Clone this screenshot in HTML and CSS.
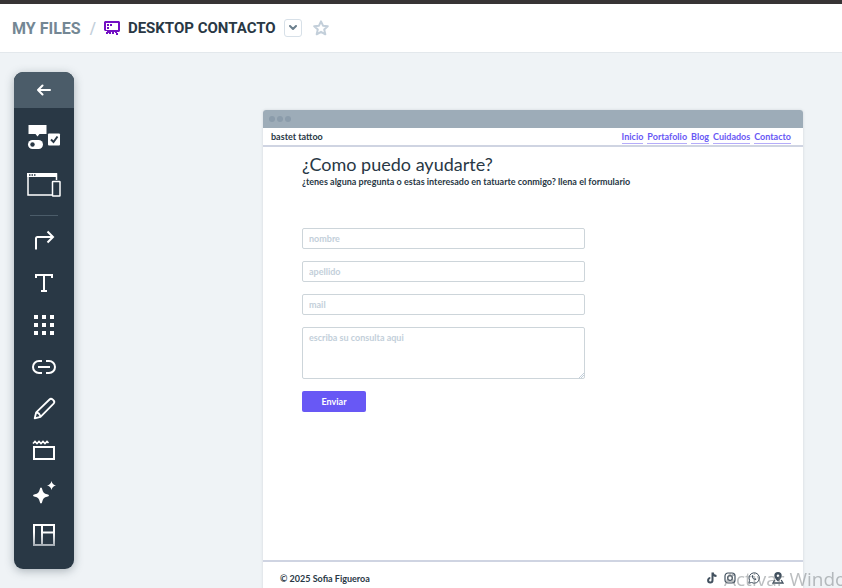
FILE: index.html
```html
<!DOCTYPE html>
<html lang="es">
<head>
<meta charset="utf-8">
<meta name="viewport" content="width=device-width, initial-scale=1">
<title>Desktop Contacto</title>
<link rel="stylesheet" href="styles.css">
</head>
<body>
<header class="topbar">
  <a class="crumb" href="#">MY FILES</a>
  <span class="slash">/</span>
  <svg class="board-icon" width="16" height="14" viewBox="0 0 16 14"><path fill-rule="evenodd" fill="#730fc3" d="M1 0h14l1 1v9l-1 1h-2v1h1v2h-2v-2h-1v-1h-1v2H8v-2H7v2H5v-1H4v1H2v-2h1v-1H1l-1-1V1zM2 2v7h12V2zM3 3h2v2H3zM6 3h2v2H6zM3 6h2v2H3z"/></svg>
  <h1 class="title">DESKTOP CONTACTO</h1>
  <button class="drop" aria-label="Opciones"><svg width="8" height="6" viewBox="0 0 8 6"><path d="M1 1l3 3 3-3" fill="none" stroke="#6b7f8d" stroke-width="2" stroke-linecap="round" stroke-linejoin="round"/></svg></button>
  <button class="star" aria-label="Favorito"><svg width="16" height="16" viewBox="0 0 16 16"><path d="M8 1.300l2 4.400 4.800.5-3.600 3.200 1.100 4.900L8 11.800l-4.300 2.500 1.100-4.900L1.200 6.200l4.800-.5z" fill="none" stroke="#c3cfda" stroke-width="2" stroke-linejoin="round"/></svg></button>
</header>
<main class="canvas">
  <nav class="tools" aria-label="Herramientas">
    <button class="back" aria-label="Volver"><svg width="14" height="12" viewBox="0 0 14 12"><path d="M13 6H1M5.500 1.500L1 6l4.500 4.500" fill="none" stroke="#fff" stroke-width="2" stroke-linecap="round" stroke-linejoin="round"/></svg></button>
    <div class="tool-list">
      <button class="tool large" aria-label="Componentes"><svg width="48" height="48" viewBox="0 0 48 48"><path fill="#fff" d="M9 12h17.500v9H19.500L17.500 23.500 15.500 21H8.500v-9z"/><rect x="8" y="27" width="15" height="9" rx="4.500" fill="#fff"/><circle cx="12.500" cy="31.500" r="2.200" fill="#293845"/><rect x="28" y="20.500" width="12" height="12" rx="1" fill="#fff"/><path d="M31 26.500l2.500 2.500 4-5.500" fill="none" stroke="#293845" stroke-width="2"/></svg></button>
      <button class="tool large" aria-label="Pantallas"><svg width="48" height="48" viewBox="0 0 48 48"><path d="M32 34H8V13h28.500v6" fill="none" stroke="#fff" stroke-width="1.500"/><path fill="#fff" d="M7 12h30v4H7z"/><path fill="#293845" d="M9 13.300h1.500v1.500H9zM11.500 13.300H13v1.500h-1.500zM14 13.300h1.500v1.500H14z"/><rect x="32.500" y="20.500" width="7.500" height="14.500" rx=".5" fill="none" stroke="#fff" stroke-width="1.500"/></svg></button>
      <div class="rule"></div>
      <button class="tool" aria-label="Flecha"><svg width="42" height="42" viewBox="0 0 42 42"><path d="M13 29.500V18.500q0-1.500 1.500-1.500H30M24.500 11.500L30 17l-5.500 5.500" fill="none" stroke="#fff" stroke-width="2"/></svg></button>
      <button class="tool" aria-label="Texto"><svg width="42" height="42" viewBox="0 0 42 42"><path d="M13 16v-3h16v3M21 13v16M18 29h6" fill="none" stroke="#fff" stroke-width="2"/></svg></button>
      <button class="tool" aria-label="Iconos"><svg width="42" height="42" viewBox="0 0 42 42"><path fill="#fff" d="M11 11h4v4h-4zM19 11h4v4h-4zM27 11h4v4h-4zM11 19h4v4h-4zM19 19h4v4h-4zM27 19h4v4h-4zM11 27h4v4h-4zM19 27h4v4h-4zM27 27h4v4h-4z"/></svg></button>
      <button class="tool" aria-label="Enlace"><svg width="42" height="42" viewBox="0 0 42 42"><path d="M19 15h-3a6 6 0 0 0 0 12h3M23 15h3a6 6 0 0 1 0 12h-3M15 21h12" fill="none" stroke="#fff" stroke-width="2"/></svg></button>
      <button class="tool" aria-label="Lápiz"><svg width="42" height="42" viewBox="0 0 42 42"><path d="M11.700 30.300l1.500-6L26.500 11.500q1.500-1.500 3.300.2l.8.8q1.500 1.500 0 3.200L17.500 28.800zM13.200 24.300q3.500.5 4.300 4.500" fill="none" stroke="#fff" stroke-width="1.800" stroke-linejoin="round"/></svg></button>
      <button class="tool" aria-label="Contenedor"><svg width="42" height="42" viewBox="0 0 42 42"><rect x="11" y="17" width="20" height="12" fill="none" stroke="#fff" stroke-width="2"/><path d="M10 13.500l2-2 2 2 2-2 2 2 2-2 2 2 2-2 1.500 1.500" fill="none" stroke="#fff" stroke-width="1.700"/></svg></button>
      <button class="tool" aria-label="Inteligencia artificial"><svg width="42" height="42" viewBox="0 0 42 42"><path fill="#fff" d="M18 15.500q1 0 1.300 2 .7 4 4.700 4.700 2 .3 2 1.300t-2 1.300q-4 .7-4.700 4.700-.3 2-1.300 2t-1.300-2q-.7-4-4.700-4.700-2-.3-2-1.300t2-1.300q4-.7 4.700-4.700.3-2 1.300-2zM28.500 9q.8 3.700 4.500 4.500-3.700.8-4.500 4.500-.8-3.700-4.500-4.500 3.700-.8 4.500-4.500z"/></svg></button>
      <button class="tool" aria-label="Plantillas"><svg width="42" height="42" viewBox="0 0 42 42"><defs><linearGradient id="fade" gradientUnits="userSpaceOnUse" x1="0" y1="18" x2="0" y2="32"><stop stop-color="#fff"/><stop offset="1" stop-color="#a3abb2"/></linearGradient></defs><path d="M11 11h20v20H11zM19 11v20M19 18.500h12" fill="none" stroke="url(#fade)" stroke-width="2"/></svg></button>
    </div>
  </nav>
  <section class="frame">
    <div class="chrome"><i></i><i></i><i></i></div>
    <div class="site-head">
      <span class="brand">bastet tattoo</span>
      <nav class="links"><a href="#">Inicio</a><a href="#">Portafolio</a><a href="#">Blog</a><a href="#">Cuidados</a><a href="#">Contacto</a></nav>
    </div>
    <div class="content">
      <h2>¿Como puedo ayudarte?</h2>
      <p>¿tenes alguna pregunta o estas interesado en tatuarte conmigo? llena el formulario</p>
      <form class="form">
        <input type="text" aria-label="nombre" placeholder="nombre">
        <input type="text" aria-label="apellido" placeholder="apellido">
        <input type="email" aria-label="mail" placeholder="mail">
        <textarea aria-label="consulta" placeholder="escriba su consulta aqui"></textarea>
        <button type="button">Enviar</button>
      </form>
    </div>
    <footer class="site-foot">
      <span>© 2025 Sofia Figueroa</span>
      <div class="social">
        <a href="#" aria-label="TikTok"><svg width="12" height="12" viewBox="0 0 12 12"><path d="M6.500.5v7.800a2.200 2.200 0 1 1-2.200-2.200M6.500.5q.5 3.200 4 3.500" fill="none" stroke="#42515f" stroke-width="2"/></svg></a>
        <a href="#" aria-label="Instagram"><svg width="12" height="12" viewBox="0 0 12 12"><g fill="none" stroke="#42515f" stroke-width="1.200"><rect x="1" y="1" width="10" height="10" rx="3"/><circle cx="6" cy="6" r="2.400"/></g><circle cx="9" cy="3" r=".8" fill="#42515f"/></svg></a>
        <a href="#" aria-label="WhatsApp"><svg width="12" height="12" viewBox="0 0 12 12"><path d="M.8 11.200l.8-2.800A5.200 5.200 0 1 1 3.600 10.500z" fill="none" stroke="#42515f"/><path d="M4 3.300q-.8 1 .5 2.900 1.500 2 3.300 1.800l.7-1-1.300-.8-.8.6Q5.200 6.200 5 5.100l.5-.6L5 3.300z" fill="#42515f"/></svg></a>
        <a href="#" aria-label="Ubicación"><svg width="12" height="12" viewBox="0 0 12 12"><path fill-rule="evenodd" fill="#42515f" d="M6 0a3.700 3.700 0 0 1 3.700 3.700Q9.700 6 6 9.500 2.300 6 2.300 3.700A3.700 3.700 0 0 1 6 0zm0 2.400a1.300 1.300 0 1 0 0 2.600 1.300 1.300 0 0 0 0-2.600z"/><path d="M2.800 8L1 11h10L9.200 8" fill="none" stroke="#42515f" stroke-width="1.300"/></svg></a>
      </div>
    </footer>
  </section>
</main>
<div class="watermark">Activar Windows</div>
</body>
</html>
```
FILE: styles.css
```css
* { box-sizing: border-box; }
body {
  margin: 0;
  height: 100vh;
  display: flex;
  flex-direction: column;
  overflow: hidden;
  background: #eff3f6;
  color: #293845;
  font-family: Roboto, "Liberation Sans", sans-serif;
}
button { border: 0; padding: 0; background: none; font: inherit; cursor: pointer; }
a { text-decoration: none; color: inherit; }
svg { display: block; }

.topbar {
  flex: none;
  display: flex;
  align-items: center;
  height: 53px;
  padding: 0 12px;
  background: #fff;
  border-top: 4px solid #373435;
  border-bottom: 1px solid #e3e8ec;
  font-size: 16px;
  font-weight: 700;
}
.crumb { color: #748794; }
.slash { margin: 0 8px 0 9px; color: #c3cfda; font-weight: 500; }
.title { margin: 0 0 0 8px; font-size: 15px; font-weight: 700; }
.drop {
  display: grid;
  place-items: center;
  width: 18px;
  height: 18px;
  margin: 0 11px 0 8px;
  border: 1px solid #d7e0e8;
  border-radius: 3px;
}

.canvas { flex: 1; display: flex; align-items: flex-start; min-height: 0; }
.tools {
  flex: none;
  width: 60px;
  margin: 19px 0 0 14px;
  overflow: hidden;
  border-radius: 9px;
  background: #293845;
  box-shadow: 0 2px 10px rgba(41, 56, 69, .35);
}
.back { display: grid; place-items: center; width: 100%; height: 36px; background: #4b5c69; }
.tool-list { display: flex; flex-direction: column; align-items: center; padding: 5px 0 13px; }
.tool { height: 42px; }
.tool.large { height: 48px; }
.rule { width: 28px; height: 1px; margin: 6px 0 4px; background: #4b5c69; }

.frame {
  flex: 1;
  display: flex;
  flex-direction: column;
  margin: 57px 39px 0 189px;
  background: #fff;
  border-radius: 3px 3px 0 0;
  box-shadow: 0 0 3px rgba(41, 56, 69, .15);
  font-family: Lato, Roboto, sans-serif;
  font-size: 9px;
  font-weight: 700;
}
.chrome {
  display: flex;
  align-items: center;
  gap: 2px;
  height: 18px;
  padding-left: 6px;
  border-radius: 3px 3px 0 0;
  background: #9dacb8;
}
.chrome i { width: 6px; height: 6px; border-radius: 50%; background: #8b9cab; }
.site-head {
  display: flex;
  justify-content: space-between;
  align-items: center;
  height: 19px;
  padding: 0 12px 0 8px;
  border-bottom: 2px solid #cfd4e2;
}
.links { display: flex; gap: 4px; color: #6858f5; }
.links a { line-height: 12px; margin-top: 2px; border-bottom: 1px solid #b5acfa; }
.content { min-height: 413px; padding: 7px 39px 0; }
.content h2 { margin: 0; font-size: 18px; line-height: 20px; font-weight: 400; }
.content p { margin: 2px 0 0; line-height: 12px; }
.form {
  display: flex;
  flex-direction: column;
  align-items: flex-start;
  gap: 12px;
  max-width: 283px;
  margin-top: 40px;
}
.form input, .form textarea {
  display: block;
  width: 100%;
  height: 21px;
  margin: 0;
  padding: 0 6px;
  border: 1px solid #cdd5da;
  border-radius: 2px;
  background: #fff;
  color: #293845;
  font: inherit;
}
.form textarea { height: 52px; padding-top: 4px; }
.form textarea::-webkit-resizer {
  background: linear-gradient(135deg, transparent 82%, #c3cfda 82% 85%, transparent 85% 90%, #c3cfda 90% 93%, transparent 93%);
}
.form ::placeholder { color: #c3cfda; opacity: 1; }
.form button {
  width: 64px;
  height: 21px;
  border-radius: 2px;
  background: #6858f5;
  color: #fff;
  font-weight: 700;
}
.site-foot {
  display: flex;
  justify-content: space-between;
  align-items: center;
  height: 34px;
  padding: 0 19px 0 17px;
  border-top: 2px solid #cfd4e2;
}
.social { display: flex; gap: 12px; }
.social a:first-child { margin-right: -6px; }
.watermark {
  position: fixed;
  left: 724px;
  bottom: -4px;
  color: rgba(120, 125, 130, .5);
  font-family: "Open Sans", sans-serif;
  font-size: 19px;
  line-height: 26px;
  white-space: nowrap;
  pointer-events: none;
}
```
